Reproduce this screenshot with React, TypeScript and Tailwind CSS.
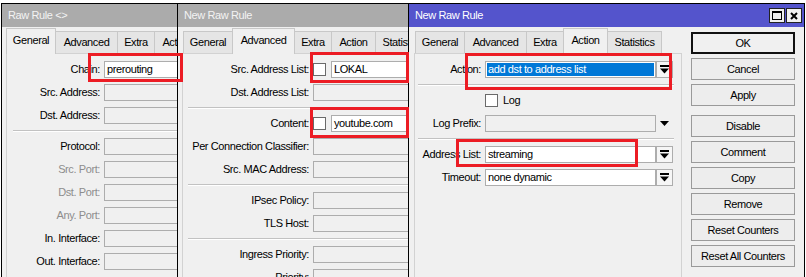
import React from "react";

const TABS = [
  { label: "General", w: "w-[50px]" },
  { label: "Advanced", w: "w-[63px]" },
  { label: "Extra", w: "w-[38px]" },
  { label: "Action", w: "w-[45px]" },
  { label: "Statistics", w: "w-[55px]" },
];

function Tabs({ active }: { active: string }) {
  return (
    <div className="flex items-end h-[25px] mt-[1px] pl-[1px] shrink-0">
      {TABS.map((t) =>
        t.label === active ? (
          <div
            key={t.label}
            className={`${t.w} shrink-0 h-[26px] -mb-px -ml-px relative z-10 bg-[#f0f0f0] border border-b-0 border-[#c8c8c8] flex items-center justify-center pb-[3px] text-black`}
          >
            {t.label}
          </div>
        ) : (
          <div
            key={t.label}
            className={`${t.w} shrink-0 h-[22px] -ml-px first:ml-0 bg-[#e5e5e5] border border-b-0 border-[#c8c8c8] flex items-center justify-center text-black`}
          >
            {t.label}
          </div>
        )
      )}
    </div>
  );
}

function TitleBar({ title, active }: { title: string; active?: boolean }) {
  return (
    <div
      className={`h-[23px] shrink-0 flex items-center pl-[6px] ${
        active ? "bg-[#5454cc] text-white" : "bg-[#ababab] text-[#f3f3f3]"
      }`}
    >
      <span className="flex-1 whitespace-nowrap">{title}</span>
      {active && (
        <div className="flex gap-[1px] pr-[2px]">
          <div className="w-[16px] h-[15px] bg-[#f0f0f0] border border-[#222] flex items-center justify-center">
            <svg width="10" height="9" viewBox="0 0 10 9">
              <rect x="0.5" y="0.5" width="9" height="8" fill="none" stroke="#000" />
              <rect x="0" y="0" width="10" height="2" fill="#000" />
            </svg>
          </div>
          <div className="w-[16px] h-[15px] bg-[#f0f0f0] border border-[#222] flex items-center justify-center">
            <svg width="8" height="8" viewBox="0 0 8 8">
              <path d="M1 1L7 7M7 1L1 7" stroke="#000" strokeWidth="2" />
            </svg>
          </div>
        </div>
      )}
    </div>
  );
}

function Row({
  label,
  lw,
  dim,
  children,
}: {
  label: string;
  lw: string;
  dim?: boolean;
  children?: React.ReactNode;
}) {
  return (
    <div className="flex items-center h-[17px] shrink-0">
      <div
        className={`${lw} shrink-0 text-right pr-[4px] whitespace-nowrap ${
          dim ? "text-[#8d8d8d]" : "text-black"
        }`}
      >
        {label}
      </div>
      {children}
    </div>
  );
}

function Box({
  value,
  white,
  className = "flex-1",
}: {
  value?: string;
  white?: boolean;
  className?: string;
}) {
  return (
    <div
      className={`h-[17px] border border-[#adadad] px-[2px] flex items-center whitespace-nowrap overflow-hidden text-black ${
        white ? "bg-white" : "bg-[#f0f0f0]"
      } ${className}`}
    >
      {value}
    </div>
  );
}

function Check() {
  return <div className="w-[13px] h-[13px] shrink-0 bg-white border border-[#6a6a6a]" />;
}

function Sep({ className }: { className: string }) {
  return <div className={`h-[2px] shrink-0 border-t border-[#c2c2c2] bg-white ${className}`} />;
}

function DropBtn() {
  return (
    <div className="w-[17px] h-[17px] shrink-0 border border-[#adadad] bg-[#f6f6f6] flex items-center justify-center">
      <svg width="9" height="9" viewBox="0 0 9 9">
        <rect x="0" y="0" width="9" height="2" fill="#000" />
        <path d="M0 3.5H9L4.5 8.5Z" fill="#000" />
      </svg>
    </div>
  );
}

function Btn({ label, primary, className = "" }: { label: string; primary?: boolean; className?: string }) {
  return (
    <div
      className={`h-[22px] shrink-0 flex items-center justify-center text-black ${
        primary ? "border-2 border-[#111] bg-[#f0f0f0]" : "border border-[#9a9a9a] bg-[#ededed]"
      } ${className}`}
    >
      {label}
    </div>
  );
}

export default function App() {
  return (
    <div className="relative w-[806px] h-[277px] overflow-hidden bg-white font-['Liberation_Sans',Arial,sans-serif] text-[11px] tracking-[-0.4px]">
      {/* Raw Rule <> */}
      <div className="absolute left-[1px] top-[3px] w-[260px] h-[300px] border border-black bg-[#f0f0f0] flex flex-col">
        <TitleBar title="Raw Rule <>" />
        <div className="flex flex-col flex-1 px-[4px]">
          <Tabs active="General" />
          <div className="flex-1 border border-[#d2d2d2] pt-[7px] flex flex-col gap-[6px]">
            <Row label="Chain:" lw="w-[97px]">
              <Box value="prerouting" white />
            </Row>
            <Row label="Src. Address:" lw="w-[97px]">
              <Box />
            </Row>
            <Row label="Dst. Address:" lw="w-[97px]">
              <Box />
            </Row>
            <Sep className="ml-[6px]" />
            <Row label="Protocol:" lw="w-[97px]">
              <Box />
            </Row>
            <Row label="Src. Port:" lw="w-[97px]" dim>
              <Box />
            </Row>
            <Row label="Dst. Port:" lw="w-[97px]" dim>
              <Box />
            </Row>
            <Row label="Any. Port:" lw="w-[97px]" dim>
              <Box />
            </Row>
            <Row label="In. Interface:" lw="w-[97px]">
              <Box />
            </Row>
            <Row label="Out. Interface:" lw="w-[97px]">
              <Box />
            </Row>
          </div>
        </div>
      </div>

      {/* New Raw Rule (Advanced) */}
      <div className="absolute left-[177px] top-[3px] z-10 w-[330px] h-[300px] border border-black bg-[#f0f0f0] flex flex-col">
        <TitleBar title="New Raw Rule" />
        <div className="flex flex-col flex-1 px-[4px]">
          <Tabs active="Advanced" />
          <div className="flex-1 border border-[#d2d2d2] pt-[7px] flex flex-col gap-[6px]">
            <Row label="Src. Address List:" lw="w-[130px]">
              <Check />
              <Box value="LOKAL" white className="flex-1 ml-[5px]" />
            </Row>
            <Row label="Dst. Address List:" lw="w-[130px]">
              <Box />
            </Row>
            <Sep className="ml-[5px]" />
            <Row label="Content:" lw="w-[130px]">
              <Check />
              <Box value="youtube.com" white className="flex-1 ml-[5px]" />
            </Row>
            <Row label="Per Connection Classifier:" lw="w-[130px]">
              <Box />
            </Row>
            <Row label="Src. MAC Address:" lw="w-[130px]">
              <Box />
            </Row>
            <Sep className="ml-[5px]" />
            <Row label="IPsec Policy:" lw="w-[130px]">
              <Box />
            </Row>
            <Row label="TLS Host:" lw="w-[130px]">
              <Box />
            </Row>
            <Sep className="ml-[5px]" />
            <Row label="Ingress Priority:" lw="w-[130px]">
              <Box />
            </Row>
            <Row label="Priority:" lw="w-[130px]">
              <Box />
            </Row>
          </div>
        </div>
      </div>

      {/* New Raw Rule (Action) - active */}
      <div className="absolute left-[408px] top-[3px] z-20 w-[397px] h-[300px] border border-black bg-[#f0f0f0] flex flex-col">
        <TitleBar title="New Raw Rule" active />
        <div className="flex flex-1 px-[5px]">
          <div className="flex flex-col w-[268px] shrink-0">
            <Tabs active="Action" />
            <div className="flex-1 border border-[#d2d2d2] pt-[7px] flex flex-col gap-[6px]">
              <Row label="Action:" lw="w-[70px]">
                <div className="w-[171px] h-[17px] border border-[#adadad] bg-white p-[1px] flex">
                  <div className="flex-1 bg-[#0078d7] text-white px-[1px] flex items-center whitespace-nowrap">
                    add dst to address list
                  </div>
                </div>
                <DropBtn />
              </Row>
              <Sep className="ml-[3px] mr-[7px]" />
              <Row label="" lw="w-[70px]">
                <Check />
                <span className="ml-[5px] text-black">Log</span>
              </Row>
              <Row label="Log Prefix:" lw="w-[70px]">
                <Box className="w-[171px]" />
                <svg width="9" height="5" viewBox="0 0 9 5" className="ml-[4px]">
                  <path d="M0 0H9L4.5 5Z" fill="#000" />
                </svg>
              </Row>
              <Sep className="ml-[3px] mr-[7px]" />
              <Row label="Address List:" lw="w-[70px]">
                <Box value="streaming" white className="w-[171px]" />
                <DropBtn />
              </Row>
              <Row label="Timeout:" lw="w-[70px]">
                <Box value="none dynamic" white className="w-[171px]" />
                <DropBtn />
              </Row>
            </div>
          </div>
          <div className="ml-[9px] w-[104px] pt-[5px] flex flex-col gap-[4px]">
            <Btn label="OK" primary />
            <Btn label="Cancel" />
            <Btn label="Apply" />
            <Btn label="Disable" className="mt-[5px]" />
            <Btn label="Comment" />
            <Btn label="Copy" />
            <Btn label="Remove" />
            <Btn label="Reset Counters" />
            <Btn label="Reset All Counters" />
          </div>
        </div>
      </div>

      {/* red highlight frames */}
      <div className="absolute z-30 left-[88px] top-[53px] w-[95px] h-[29px] border-[3px] border-[#ec1c24]" />
      <div className="absolute z-30 left-[310px] top-[52px] w-[99px] h-[31px] border-[3px] border-[#ec1c24]" />
      <div className="absolute z-30 left-[310px] top-[107px] w-[99px] h-[31px] border-[3px] border-[#ec1c24]" />
      <div className="absolute z-30 left-[465px] top-[53px] w-[207px] h-[37px] border-[3px] border-[#ec1c24]" />
      <div className="absolute z-30 left-[456px] top-[139px] w-[182px] h-[28px] border-[3px] border-[#ec1c24]" />
    </div>
  );
}
